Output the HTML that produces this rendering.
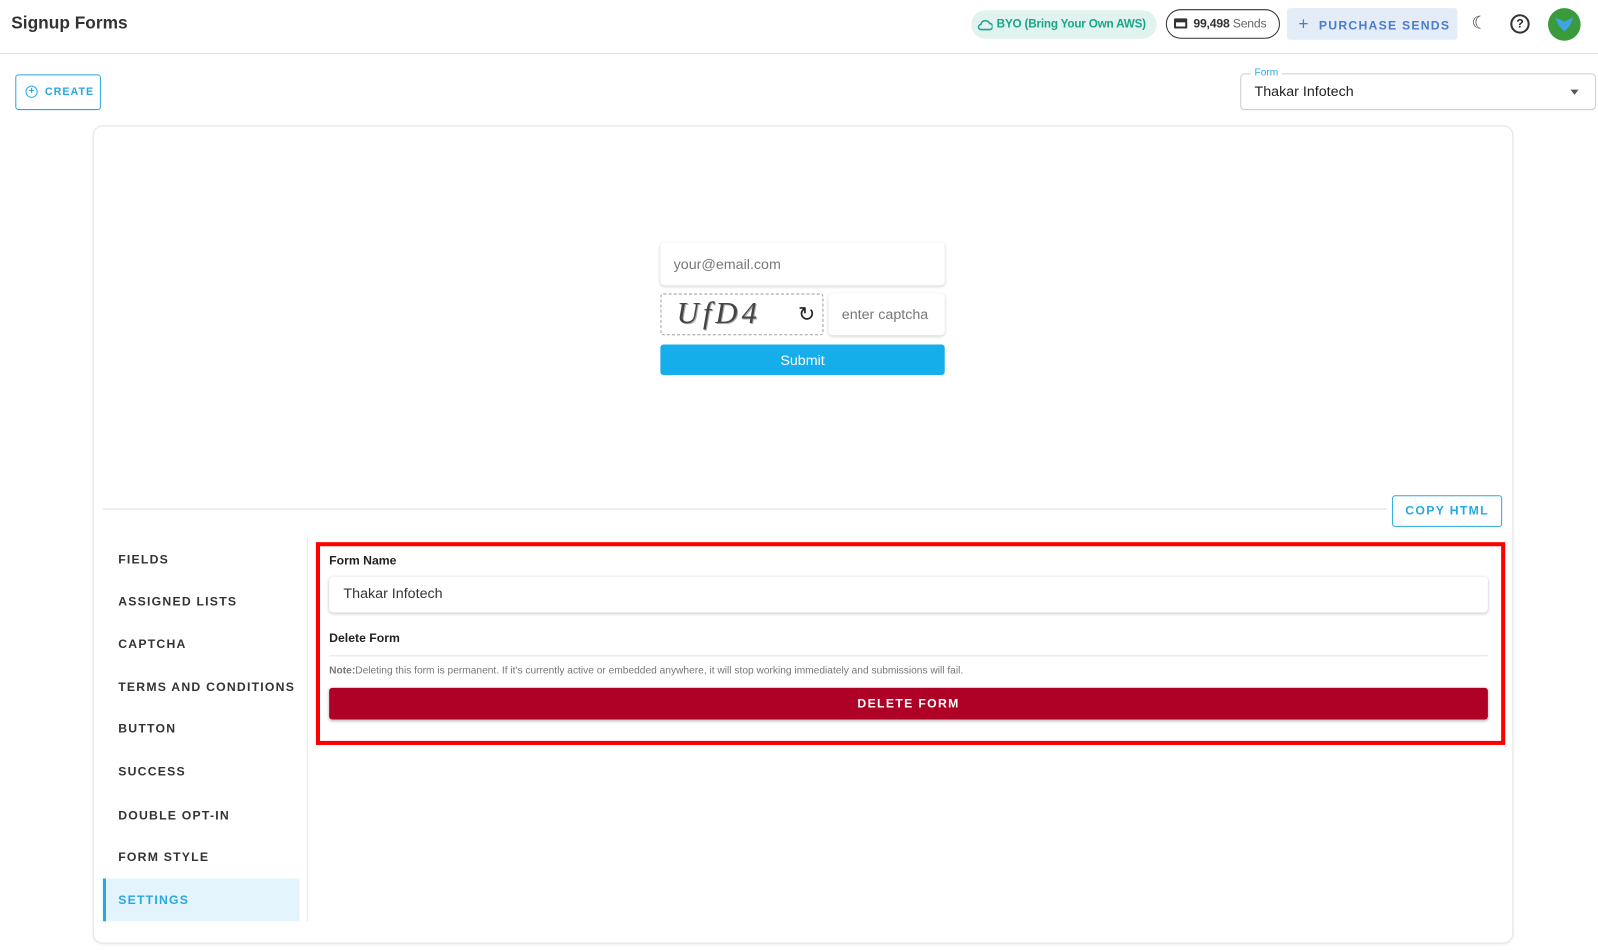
<!DOCTYPE html>
<html><head><meta charset="utf-8"><style>
*{box-sizing:border-box;margin:0;padding:0}
body{width:1598px;height:950px;background:#fff;font-family:"Liberation Sans",sans-serif;position:relative;overflow:hidden;color:#222}
#w{position:absolute;left:0;top:0;width:1568px;height:932px;transform:scale(1.0191);transform-origin:0 0}
.a{position:absolute;white-space:nowrap}
.nav{font-size:12px;font-weight:bold;letter-spacing:1.2px;color:#333;left:116px}
</style></head><body><div id="w">
<div class="a" style="left:0;top:0;width:1568px;height:53px;border-bottom:1px solid #e3e3e3"></div>
<div class="a" style="left:11px;top:13px;font-size:17px;font-weight:bold;color:#333">Signup Forms</div>
<div class="a" style="left:953px;top:10px;width:182px;height:28px;border-radius:14px;background:#e0f3ef;color:#1aa58a;font-size:11.5px;font-weight:bold;line-height:28px;padding-left:25px;letter-spacing:-0.2px">BYO (Bring Your Own AWS)
<svg class="a" style="left:6px;top:8px" width="15" height="12" viewBox="0 0 15 12"><path d="M4 11h8a3 3 0 0 0 0-6 4.5 4.5 0 0 0-8.5 1A2.5 2.5 0 0 0 4 11z" fill="none" stroke="#1aa58a" stroke-width="1.5"/></svg></div>
<div class="a" style="left:1144px;top:9px;width:112px;height:29px;border-radius:15px;border:1.5px solid #333;font-size:12px;line-height:26px;padding-left:26px;color:#333;letter-spacing:-0.2px"><b>99,498</b> <span style="color:#666">Sends</span>
<div class="a" style="left:7px;top:8px;width:13px;height:10px;border:2px solid #333;border-top-width:4px;border-radius:1px"></div></div>
<div class="a" style="left:1263px;top:8px;width:167px;height:31px;background:#e4ecf8;border-radius:3px;color:#4a7ccc;font-size:12px;font-weight:bold;letter-spacing:1.2px;line-height:31px;padding-left:11px"><span style="font-size:17px;font-weight:normal">+</span>&nbsp; PURCHASE SENDS</div>
<div class="a" style="left:1444px;top:13px;font-size:17px;color:#333">☾</div>
<div class="a" style="left:1482px;top:14px;width:19px;height:19px;border:2px solid #333;border-radius:50%;font-size:12px;font-weight:bold;text-align:center;line-height:15px">?</div>
<div class="a" style="left:1519px;top:8px;width:32px;height:32px;border-radius:50%;background:#3a9a3c"><div class="a" style="left:7px;top:9px;width:18px;height:14px;background:#3da5e0;clip-path:polygon(0 0,50% 30%,100% 0,80% 60%,50% 100%,20% 60%)"></div></div>

<div class="a" style="left:15px;top:73px;width:84px;height:35px;border:1px solid #29a8e0;border-radius:3px;color:#29a8e0;font-size:10.5px;font-weight:bold;letter-spacing:1px;line-height:33px;padding-left:28px">CREATE
<div class="a" style="left:9px;top:10px;width:12px;height:12px;border:1.5px solid #29a8e0;border-radius:50%;font-size:10px;line-height:9px;text-align:center;letter-spacing:0">+</div></div>
<div class="a" style="left:1217px;top:72px;width:349px;height:36px;border:1px solid #ccc;border-radius:4px"></div>
<div class="a" style="left:1227px;top:66px;background:#fff;padding:0 4px;font-size:10px;color:#29a8e0">Form</div>
<div class="a" style="left:1231px;top:81px;font-size:14px;color:#222">Thakar Infotech</div>
<div class="a" style="left:1541px;top:88px;border:4px solid transparent;border-top:5px solid #555"></div>

<div class="a" style="left:91px;top:123px;width:1394px;height:803px;border:1px solid #e3e3e3;border-radius:10px;box-shadow:0 1px 3px rgba(0,0,0,.06)"></div>
<div class="a" style="left:648px;top:238px;width:279px;height:42px;border-radius:4px;box-shadow:0 1px 3px rgba(0,0,0,.18);font-size:14px;color:#777;line-height:42px;padding-left:13px">your@email.com</div>
<div class="a" style="left:648px;top:288px;width:160px;height:41px;border:1px dashed #999;border-radius:3px"></div>
<div class="a" style="left:664px;top:291px;font-family:'Liberation Serif',serif;font-size:30px;font-style:italic;color:#444;letter-spacing:4px;text-shadow:1px 1px 0 #aaa">UfD4</div>
<div class="a" style="left:783px;top:296px;font-size:20px;color:#222">↻</div>
<div class="a" style="left:813px;top:288px;width:114px;height:41px;border-radius:4px;box-shadow:0 1px 3px rgba(0,0,0,.18);font-size:14px;color:#777;line-height:41px;padding-left:13px">enter captcha</div>
<div class="a" style="left:648px;top:338px;width:279px;height:30px;background:#16aeea;border-radius:3px;color:#fff;font-size:14px;text-align:center;line-height:30px">Submit</div>

<div class="a" style="left:101px;top:499px;width:1260px;height:1px;background:#ddd"></div>
<div class="a" style="left:1366px;top:486px;width:108px;height:31px;border:1px solid #29a8e0;border-radius:3px;color:#29a8e0;font-size:12px;font-weight:bold;letter-spacing:1.3px;text-align:center;line-height:29px">COPY HTML</div>

<div class="a" style="left:301px;top:528px;width:1px;height:376px;background:#e3e3e3"></div>
<div class="a nav" style="top:542px">FIELDS</div>
<div class="a nav" style="top:583px">ASSIGNED LISTS</div>
<div class="a nav" style="top:625px">CAPTCHA</div>
<div class="a nav" style="top:667px">TERMS AND CONDITIONS</div>
<div class="a nav" style="top:708px">BUTTON</div>
<div class="a nav" style="top:750px">SUCCESS</div>
<div class="a nav" style="top:793px">DOUBLE OPT-IN</div>
<div class="a nav" style="top:834px">FORM STYLE</div>
<div class="a" style="left:101px;top:862px;width:193px;height:42px;background:#e3f4fc;border-left:3px solid #29a8e0"></div>
<div class="a nav" style="top:876px;color:#29a8e0">SETTINGS</div>

<div class="a" style="left:310px;top:532px;width:1167px;height:199px;border:4px solid #f00"></div>
<div class="a" style="left:323px;top:543px;font-size:12px;font-weight:bold">Form Name</div>
<div class="a" style="left:323px;top:566px;width:1137px;height:35px;border-radius:4px;box-shadow:0 1px 3px rgba(0,0,0,.25);font-size:14px;color:#333;line-height:33px;padding-left:14px">Thakar Infotech</div>
<div class="a" style="left:323px;top:619px;font-size:12px;font-weight:bold">Delete Form</div>
<div class="a" style="left:323px;top:643px;width:1137px;height:1px;background:#e3e3e3"></div>
<div class="a" style="left:323px;top:653px;font-size:10px;color:#777"><b>Note:</b>Deleting this form is permanent. If it's currently active or embedded anywhere, it will stop working immediately and submissions will fail.</div>
<div class="a" style="left:323px;top:675px;width:1137px;height:31px;background:#af0025;border-radius:3px;box-shadow:0 1px 3px rgba(0,0,0,.3);color:#fff;font-size:12px;font-weight:bold;letter-spacing:1.3px;text-align:center;line-height:31px">DELETE FORM</div>
</div></body></html>
